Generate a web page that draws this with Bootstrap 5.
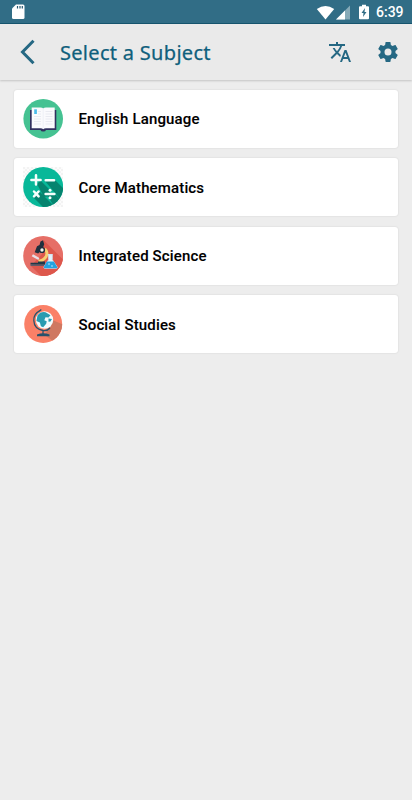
<!DOCTYPE html>
<html lang="en">
<head>
<meta charset="utf-8">
<meta name="viewport" content="width=device-width, initial-scale=1">
<title>Select a Subject</title>
<link href="https://cdn.jsdelivr.net/npm/bootstrap@5.3.0/dist/css/bootstrap.min.css" rel="stylesheet">
<style>
body{background:#ededed;font-family:Roboto,sans-serif;min-height:800px;overflow:hidden}
svg{display:block;flex:none}
.status-bar{height:24px;background:#316d86;border-bottom:1px solid #17566f;padding:0 8px 0 11px;color:#fff}
.clock{font-size:14px;line-height:24px;font-weight:500;width:28px;margin-left:7px;white-space:nowrap;padding-top:1px}
.app-bar{height:56px;background:#eaeaea;color:#0f5f7c;box-shadow:0 1px 2px rgba(0,0,0,.18);padding:0 14px 0 20px}
.app-title{font:400 20px/28px "Noto Sans",sans-serif;margin-left:25px;padding-top:1px;letter-spacing:.3px;-webkit-text-stroke:.25px #0f5f7c}
.settings-icon{margin-left:24px;margin-right:-2px}
.subjects{padding:10px 14px;gap:10.4px}
.subject{height:58px;border:0;border-radius:3px;box-shadow:0 0 2px rgba(0,0,0,.13);padding:0 9px;gap:15.5px}
.subject-name{font-size:15px;line-height:20px;font-weight:500;color:#000;letter-spacing:.15px;padding-top:.8px;-webkit-text-stroke:.1px #000}
</style>
</head>
<body>
<div class="status-bar d-flex align-items-center">
  <svg width="14" height="17" viewBox="0 0 14 17"><path d="M5 1.500h7q1.500 0 1.500 1.500v11.500q0 1.500-1.500 1.500H2.500Q1 16 1 14.500V5.500z" fill="#fff"/><path d="M6.500 3v2.500M9 3v2.500M11.300 3v2.500" stroke="#26566f" stroke-width="1.200"/></svg>
  <svg class="ms-auto" width="20" height="16" viewBox="0 0 20 16"><path d="M.8 5Q9.500-1 18.200 5L9.500 15.500z" fill="#fff"/></svg>
  <svg width="15" height="16" viewBox="0 0 15 16"><path d="M0 15.500 14 1.500v14z" fill="#86aab8"/><path d="M0 15.500 9 6.500v9z" fill="#fff"/></svg>
  <svg class="ms-2" width="10" height="16" viewBox="0 0 10 16"><path d="M3 .8h4V2.300h2q1 0 1 1v11q0 1-1 1H1q-1 0-1-1v-11q0-1 1-1h2z" fill="#fff"/><path d="M6 4 2.500 9H4.500L4 13 7.500 8H5.500z" fill="#316d86"/></svg>
  <div class="clock">6:39</div>
</div>
<header class="app-bar d-flex align-items-center">
  <svg width="15" height="26" viewBox="0 0 15 26"><path d="M13.500 1.800 2.500 13 13.500 24.200" fill="none" stroke="#256883" stroke-width="3"/></svg>
  <h1 class="app-title mb-0">Select a Subject</h1>
  <svg class="ms-auto" width="24" height="24" viewBox="0 0 24 24" fill="#256883"><path d="m12.870 15.070-2.540-2.510.03-.03A17.520 17.520 0 0 0 14.070 6H17V4h-7V2H8v2H1v2h11.170C11.500 7.920 10.440 9.750 9 11.350 8.070 10.320 7.300 9.190 6.690 8h-2c.73 1.630 1.730 3.170 2.980 4.560l-5.090 5.020L4 19l5-5 3.110 3.110.76-2.040zM18.500 10h-2L12 22h2l1.120-3h4.750L21 22h2l-4.500-12zm-2.620 7 1.620-4.330L19.120 17h-3.240z"/></svg>
  <svg class="settings-icon" width="24" height="24" viewBox="0 0 24 24" fill="#256883"><path d="M19.430 12.980c.04-.32.07-.64.07-.98s-.03-.66-.07-.98l2.110-1.650c.19-.15.24-.42.12-.64l-2-3.460c-.12-.22-.39-.3-.61-.22l-2.490 1c-.52-.4-1.080-.73-1.690-.98l-.38-2.650C14.460 2.180 14.250 2 14 2h-4c-.25 0-.46.18-.49.42l-.38 2.650c-.61.25-1.170.59-1.690.98l-2.490-1c-.23-.09-.49 0-.61.22l-2 3.460c-.13.22-.07.49.12.64l2.110 1.650c-.04.32-.07.65-.07.98s.03.66.07.98l-2.110 1.650c-.19.15-.24.42-.12.64l2 3.460c.12.22.39.3.61.22l2.490-1c.52.4 1.080.73 1.690.98l.38 2.650c.03.24.24.42.49.42h4c.25 0 .46-.18.49-.42l.38-2.650c.61-.25 1.170-.59 1.690-.98l2.490 1c.23.09.49 0 .61-.22l2-3.460c.12-.22.07-.49-.12-.64l-2.110-1.650zM12 15.500A3.500 3.500 0 1 1 12 8.500a3.500 3.500 0 0 1 0 7z"/></svg>
</header>
<main class="subjects d-flex flex-column">
  <div class="card subject flex-row align-items-center">
    <svg width="40" height="40" viewBox="0 0 40 40"><circle cx="20.200" cy="19.800" r="19.800" fill="#45c292"/><path d="M7 11h26.300v20H23q-.5 1.500-2.800 1.500T17.500 31H7z" fill="#31305f"/><path d="M8.700 8.500h8.800q2 0 2.700 1 .8-1 2.800-1h8.700v20.800H23q-2 0-2.800 1-.7-1-2.700-1H8.700z" fill="#fafafd"/><path d="M20.200 9.500v20" stroke="#eef0f6" stroke-width="1"/><path d="M15 12.500h3M15 15h3M11 17.500h7M11 20h7M11 22.500h7M11 25h7M22.500 12.500h7M22.500 15h7M22.500 17.500h7M22.500 20h7M22.500 22.500h7M22.500 25h7" stroke="#e4e6ee" stroke-width=".8"/><path d="M11.200 10.300h2.700v4.700h-2.700z" fill="#4bbbea"/></svg>
    <div class="subject-name">English Language</div>
  </div>
  <div class="card subject flex-row align-items-center">
    <svg width="40" height="40" viewBox="0 0 40 40"><defs><pattern id="checks" width="4" height="4" patternUnits="userSpaceOnUse"><path d="M0 0h2v2H0zM2 2h2v2H2z" fill="#f3f3f3"/></pattern><clipPath id="mathDisc"><circle cx="20.200" cy="20" r="20"/></clipPath></defs><path d="M0 0h40v40H0z" fill="#fcfcfc"/><path d="M0 0h40v40H0z" fill="url(#checks)"/><circle cx="20.200" cy="20" r="20" fill="#08b899"/><g clip-path="url(#mathDisc)" fill="#06846f"><path d="M17.500 13.500 27 23v6l-6 1-7-13zM31.500 12.500 42 23v15L22 14zM10 30l6-6 22 22H26zM24 28l8-1 12 12-10 5z"/></g><path d="M13 8.300v9.200M8.400 12.900h9.200M22.700 13.200h8.400M11 24.500l4.600 4.800M15.600 24.500 11 29.300M22.600 27h8.800" stroke="#f5fffc" stroke-width="2.500" stroke-linecap="round"/><circle cx="27" cy="23.200" r="1.500" fill="#f5fffc"/><circle cx="27" cy="30.800" r="1.500" fill="#f5fffc"/></svg>
    <div class="subject-name">Core Mathematics</div>
  </div>
  <div class="card subject flex-row align-items-center">
    <svg width="40" height="40" viewBox="0 0 40 40"><defs><clipPath id="labDisc"><circle cx="20.200" cy="20" r="20"/></clipPath></defs><circle cx="20.200" cy="20" r="20" fill="#e66f67"/><path clip-path="url(#labDisc)" d="m20.500 4 24 24-10 16H22L8 30l11-12z" fill="#dd574c"/><path d="M21.800 12.800q3.500 3 1.300 7.700-2.400 4.300-7.600 4.700" fill="none" stroke="#f6cf72" stroke-width="3"/><path d="m17.500 5.500 2.500-1.200 1.200 4-1.700 5-4.300 4.200-3.500-1.200 2.300-6 2.500-1.300z" fill="#20303e"/><circle cx="19" cy="14" r="3.100" fill="#20303e"/><circle cx="19" cy="14" r="1.700" fill="#f3f4ef"/><path d="m10 18.300 6.500 3.700-1.200 2-6.600-3.700z" fill="#e9dfe6"/><path d="M15 25.500h7v3H7.500v-1.700H15z" fill="#203848"/><path d="M7.500 28.500h14v1.200h-14z" fill="#2e5b70"/><path d="M24.800 18.500h5M25.700 19v4.700L21 31q-.5 1 .7 1.200h11.700q1.300-.2.700-1.200L29.200 23.700V19z" fill="#e2f4fc" stroke="#d2ecfa" stroke-width=".9"/><path d="M23.700 25.600h7.200L34.200 31q.5 1.200-.7 1.200H21.500q-1.200-.1-.6-1.200z" fill="#24a2df"/><circle cx="26" cy="28" r=".8" fill="#c7ecff"/><circle cx="29" cy="30" r=".8" fill="#c7ecff"/></svg>
    <div class="subject-name">Integrated Science</div>
  </div>
  <div class="card subject flex-row align-items-center">
    <svg width="40" height="40" viewBox="0 0 40 40"><defs><clipPath id="globeDisc"><circle cx="20.200" cy="20" r="19"/></clipPath></defs><circle cx="20.200" cy="20" r="19" fill="#fa8067"/><path clip-path="url(#globeDisc)" d="M28 15.500 44 22 34 40l-11-8 1-8z" fill="#cf7861"/><circle cx="21.500" cy="16" r="8.700" fill="#f3fbfd"/><path d="M14.500 11.500q3-4.200 8-3.300l5 3-2 2.300-3-.2-1.200 3 2.400 1-.5 2.500-3 3.500-2.300-1-1-3.800-3.500-1.500zM25.500 14.500l3.500.5-1.500 2.500-2 .2z" fill="#299bb0"/><path d="m18.300 5.400-1.400 1.300Q10.500 10 10.800 16.500q.4 8.500 9.200 10 4.500.6 7-2.500M20 26v4" fill="none" stroke="#28516b" stroke-width="1.300"/><path d="M14 30.500q6.300-2.500 12.500 0v1.700H14z" fill="#28516b"/></svg>
    <div class="subject-name">Social Studies</div>
  </div>
</main>
<script src="https://cdn.jsdelivr.net/npm/bootstrap@5.3.0/dist/js/bootstrap.bundle.min.js"></script>
</body>
</html>
